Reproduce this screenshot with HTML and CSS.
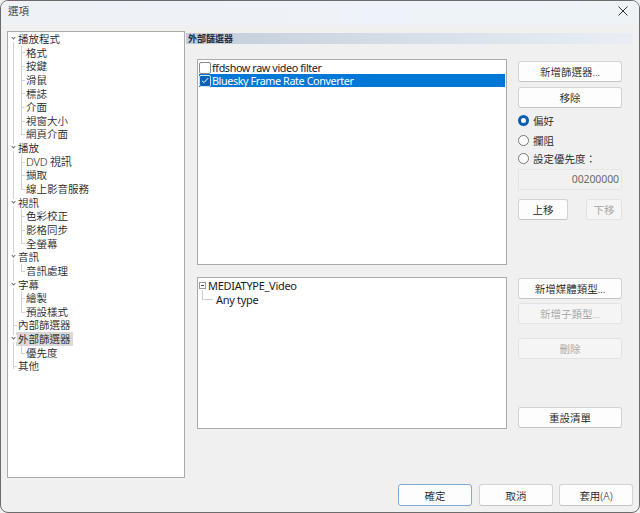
FILE: index.html
```html
<!DOCTYPE html>
<html>
<head>
<meta charset="utf-8">
<link rel="stylesheet" href="styles.css">
</head>
<body>
<div class="window">
  <div class="titlebar">
    <span class="title">選項</span>
    <svg class="close" width="10" height="10" viewBox="0 0 10 10"><path d="M0.5 0.5 L9.5 9.5 M9.5 0.5 L0.5 9.5" stroke="#333" stroke-width="1" fill="none"/></svg>
  </div>
  <div class="main">
    <div class="tree">
      <div class="group">
        <div class="row top"><span class="chev"></span>播放程式</div>
        <div class="children">
          <div class="row child">格式</div>
          <div class="row child">按鍵</div>
          <div class="row child">滑鼠</div>
          <div class="row child">標誌</div>
          <div class="row child">介面</div>
          <div class="row child">視窗大小</div>
          <div class="row child">網頁介面</div>
        </div>
      </div>
      <div class="group">
        <div class="row top"><span class="chev"></span>播放</div>
        <div class="children">
          <div class="row child latin">DVD 視訊</div>
          <div class="row child">擷取</div>
          <div class="row child">線上影音服務</div>
        </div>
      </div>
      <div class="group">
        <div class="row top"><span class="chev"></span>視訊</div>
        <div class="children">
          <div class="row child">色彩校正</div>
          <div class="row child">影格同步</div>
          <div class="row child">全螢幕</div>
        </div>
      </div>
      <div class="group">
        <div class="row top"><span class="chev"></span>音訊</div>
        <div class="children">
          <div class="row child">音訊處理</div>
        </div>
      </div>
      <div class="group">
        <div class="row top"><span class="chev"></span>字幕</div>
        <div class="children">
          <div class="row child">繪製</div>
          <div class="row child">預設樣式</div>
        </div>
      </div>
      <div class="row top leaf">內部篩選器</div>
      <div class="group">
        <div class="row top"><span class="chev"></span><span class="sel">外部篩選器</span></div>
        <div class="children">
          <div class="row child">優先度</div>
        </div>
      </div>
      <div class="row top leaf last">其他</div>
    </div>
    <div class="panel">
      <div class="header">外部篩選器</div>
      <div class="upper">
        <div class="listbox filters">
          <div class="item"><span class="cb"></span>ffdshow raw video filter</div>
          <div class="item selected"><span class="cb on"><svg width="8" height="7" viewBox="0 0 8 7"><path d="M1 3.8 L3 5.6 L7 1.2" stroke="#fff" stroke-width="1" fill="none"/></svg></span>Bluesky Frame Rate Converter</div>
        </div>
        <div class="btncol">
          <div class="btn">新增篩選器...</div>
          <div class="btn gap5">移除</div>
          <div class="radio first"><span class="rb on"></span>偏好</div>
          <div class="radio"><span class="rb"></span>攔阻</div>
          <div class="radio third"><span class="rb"></span>設定優先度：</div>
          <div class="input">00200000</div>
          <div class="btnrow">
            <div class="btn small">上移</div>
            <div class="btn small narrow disabled">下移</div>
          </div>
        </div>
      </div>
      <div class="lower">
        <div class="listbox types">
          <div class="trow"><span class="minus"></span>MEDIATYPE_Video</div>
          <div class="trow sub">Any type</div>
        </div>
        <div class="btncol lowcol">
          <div class="btn">新增媒體類型...</div>
          <div class="btn disabled gap4">新增子類型...</div>
          <div class="btn disabled gap14">刪除</div>
          <div class="btn gap48">重設清單</div>
        </div>
      </div>
    </div>
  </div>
  <div class="footer">
    <div class="btn foot default">確定</div>
    <div class="btn foot">取消</div>
    <div class="btn foot">套用(A)</div>
  </div>
</div>
</body>
</html>
```
FILE: styles.css
```css
html, body {
  margin: 0;
  padding: 0;
  background: #f0f0f0;
}
body {
  width: 640px;
  height: 513px;
  overflow: hidden;
  font-family: "Noto Sans", "Noto Sans CJK TC", sans-serif;
  font-size: 11px;
  color: #1b1b1b;
}
.window {
  width: 640px;
  height: 513px;
  box-sizing: border-box;
  border: 1px solid #6c6c6c;
  border-radius: 8px;
  background: #f0f0f0;
  overflow: hidden;
  display: flex;
  flex-direction: column;
}
.titlebar {
  height: 29px;
  flex: none;
  background: linear-gradient(90deg, #eef1f6 0%, #eef3f9 60%, #eef3f8 100%);
  display: flex;
  align-items: center;
  justify-content: space-between;
  padding: 0 11px 0 7px;
  margin-top: -5px;
}
.title {
  font-family: "Noto Sans CJK TC", sans-serif;
  font-size: 10.5px;
  font-weight: 350;
  color: #333;
}
.close {
  display: block;
}
.main {
  display: flex;
  padding: 6px 0 0 6px;
  flex: none;
}
.tree {
  width: 178px;
  height: 447px;
  box-sizing: border-box;
  border: 1px solid #ababab;
  background: #fff;
  position: relative;
  font-family: "Noto Sans CJK TC", sans-serif;
  font-size: 10.5px;
  font-weight: 350;
  color: #1e1e1e;
}
.tree::before {
  content: "";
  position: absolute;
  left: 5px;
  top: 9px;
  height: 328px;
  border-left: 1px solid #d3d3d3;
}
.row {
  height: 13.65px;
  line-height: 13.65px;
  position: relative;
  white-space: nowrap;
}
.row.top {
  padding-left: 10px;
}
.row.child {
  padding-left: 18px;
}
.row.latin {
  font-family: "Noto Sans", "Noto Sans CJK TC", sans-serif;
  font-size: 11px;
  letter-spacing: -0.2px;
}
.chev {
  position: absolute;
  left: 2px;
  top: 3px;
  width: 7px;
  height: 7px;
  background: #fff;
}
.chev::after {
  content: "";
  position: absolute;
  left: 2px;
  top: 1px;
  width: 2px;
  height: 2px;
  border-right: 1px solid #666;
  border-bottom: 1px solid #666;
  transform: rotate(45deg);
}
.children {
  position: relative;
}
.children::before {
  content: "";
  position: absolute;
  left: 13px;
  top: 0;
  bottom: 6.8px;
  border-left: 1px solid #d3d3d3;
}
.row.child::after {
  content: "";
  position: absolute;
  left: 13px;
  top: 6.8px;
  width: 4px;
  border-top: 1px solid #d3d3d3;
}
.row.leaf::after {
  content: "";
  position: absolute;
  left: 5px;
  top: 6.8px;
  width: 4px;
  border-top: 1px solid #d3d3d3;
}
.sel {
  background: #d9d9d9;
  margin-left: -2px;
  padding: 0 2px;
  display: inline-block;
  height: 13.65px;
}
.panel {
  margin-left: 1px;
  width: 446px;
}
.header {
  margin-top: 2px;
  height: 11px;
  line-height: 11px;
  padding-left: 2px;
  background: linear-gradient(90deg, #c3cddb 0%, #d6dee8 50%, #e9eef4 100%);
  font-family: "Noto Sans CJK TC", sans-serif;
  font-size: 9px;
  font-weight: bold;
  color: #1f2a3a;
}
.upper {
  display: flex;
  margin-top: 15px;
  padding-left: 11px;
}
.listbox {
  width: 310px;
  box-sizing: border-box;
  border: 1px solid #ababab;
  background: #fff;
}
.filters {
  height: 206px;
  padding: 1px 1px 0 1px;
}
.item {
  height: 13px;
  line-height: 13px;
  display: flex;
  align-items: center;
  white-space: nowrap;
  font-size: 10.8px;
  letter-spacing: -0.4px;
}
.item.selected {
  background: #0078d7;
  color: #fff;
}
.cb {
  width: 10px;
  height: 10px;
  border: 1px solid #8a8a8a;
  border-radius: 2px;
  background: #fff;
  margin-right: 1px;
  flex: none;
  display: flex;
  align-items: center;
  justify-content: center;
}
.cb.on {
  background: #0a63b8;
  border-color: #cfe2f5;
}
.cb svg {
  display: block;
}
.btncol {
  margin-left: 11px;
  width: 104px;
  padding-top: 2px;
  display: flex;
  flex-direction: column;
}
.btn {
  height: 21px;
  box-sizing: border-box;
  border: 1px solid #d3d3d3;
  border-bottom-color: #c4c4c4;
  border-radius: 3px;
  background: #fdfdfd;
  display: flex;
  align-items: center;
  justify-content: center;
  font-family: "Noto Sans", "Noto Sans CJK TC", sans-serif;
  font-size: 10.5px;
  font-weight: 350;
  color: #1b1b1b;
  flex: none;
  white-space: nowrap;
}
.btn.disabled {
  background: #f5f5f5;
  border-color: #e3e3e3;
  color: #a2a2a2;
}
.gap5 { margin-top: 5px; }
.gap4 { margin-top: 4px; }
.gap14 { margin-top: 14px; }
.gap48 { margin-top: 48px; }
.radio {
  display: flex;
  align-items: center;
  height: 14px;
  font-family: "Noto Sans CJK TC", sans-serif;
  font-size: 10.5px;
  font-weight: 350;
  margin-top: 6px;
}
.radio.first { margin-top: 5px; }
.radio + .radio { margin-top: 6px; }
.radio.third { margin-top: 4px; }
.rb {
  width: 11px;
  height: 11px;
  box-sizing: border-box;
  border: 1px solid #777;
  border-radius: 50%;
  background: #fff;
  margin-right: 4px;
  flex: none;
}
.rb.on {
  border: 3.5px solid #0a5fb4;
  background: #fff;
}
.input {
  margin-top: 4px;
  height: 21px;
  box-sizing: border-box;
  border: 1px solid #e6e6e6;
  background: #f1f1f1;
  text-align: right;
  line-height: 19px;
  padding-right: 2px;
  color: #6a6a6a;
  font-size: 10.5px;
  letter-spacing: -0.1px;
}
.btnrow {
  display: flex;
  justify-content: space-between;
  margin-top: 9px;
}
.btn.small { width: 50px; }
.btn.narrow { width: 36px; }
.lower {
  display: flex;
  margin-top: 12px;
  padding-left: 11px;
}
.types {
  height: 152px;
  padding-top: 1px;
}
.lowcol {
  padding-top: 1px;
}
.trow {
  height: 13.5px;
  line-height: 13.5px;
  display: flex;
  align-items: center;
  white-space: nowrap;
  font-size: 11px;
  letter-spacing: -0.3px;
  position: relative;
}
.minus {
  width: 7px;
  height: 7px;
  box-sizing: border-box;
  border: 1px solid #9a9a9a;
  margin: 0 2px 0 1px;
  position: relative;
  flex: none;
}
.minus::after {
  content: "";
  position: absolute;
  left: 1px;
  top: 2px;
  width: 3px;
  border-top: 1px solid #444;
}
.trow.sub {
  padding-left: 18px;
}
.trow.sub::before {
  content: "";
  position: absolute;
  left: 4px;
  top: -3px;
  height: 9px;
  width: 10px;
  border-left: 1px solid #cfcfcf;
  border-bottom: 1px solid #cfcfcf;
}
.footer {
  display: flex;
  justify-content: flex-end;
  gap: 7px;
  margin-top: 6px;
  padding-right: 6px;
}
.btn.foot {
  width: 74px;
  height: 22px;
}
.btn.default {
  border: 1px solid #7fa9d6;
}
.footer .btn.foot:last-child { margin-left: -1px; }
```
